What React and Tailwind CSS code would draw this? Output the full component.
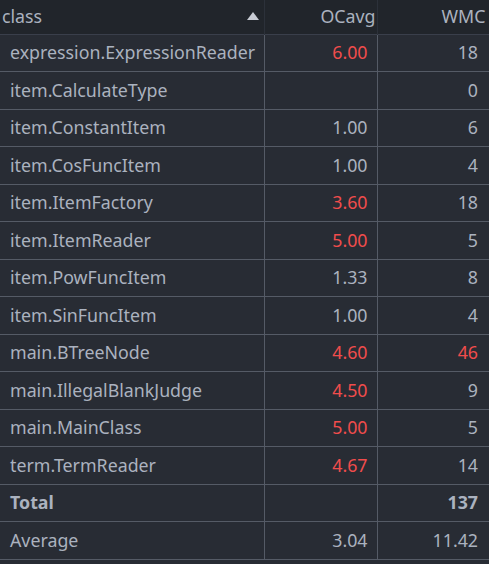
import React from "react";

const rows = [
  { name: "expression.ExpressionReader", oc: "6.00", ocRed: true, wmc: "18" },
  { name: "item.CalculateType", oc: "", wmc: "0" },
  { name: "item.ConstantItem", oc: "1.00", wmc: "6" },
  { name: "item.CosFuncItem", oc: "1.00", wmc: "4" },
  { name: "item.ItemFactory", oc: "3.60", ocRed: true, wmc: "18" },
  { name: "item.ItemReader", oc: "5.00", ocRed: true, wmc: "5" },
  { name: "item.PowFuncItem", oc: "1.33", wmc: "8" },
  { name: "item.SinFuncItem", oc: "1.00", wmc: "4" },
  { name: "main.BTreeNode", oc: "4.60", ocRed: true, wmc: "46", wmcRed: true },
  { name: "main.IllegalBlankJudge", oc: "4.50", ocRed: true, wmc: "9" },
  { name: "main.MainClass", oc: "5.00", ocRed: true, wmc: "5" },
  { name: "term.TermReader", oc: "4.67", ocRed: true, wmc: "14" },
];

export default function App() {
  return (
    <div
      className="w-[489px] h-[564px] overflow-hidden bg-[#282c34] text-[#abb2bf] text-[17.8px]"
      style={{ fontFamily: '"Noto Sans", "Open Sans", sans-serif' }}
    >
      <table className="w-[493px] table-fixed border-collapse">
        <colgroup>
          <col className="w-[264px]" />
          <col className="w-[113px]" />
          <col className="w-[116px]" />
        </colgroup>
        <thead className="bg-[#21252b]">
          <tr className="h-[34px] border-b border-[#3a3f4b]">
            <th className="pl-[2px] pr-[4px] text-left font-normal border-r border-[#2c313a]">
              <div className="flex items-center justify-between">
                <span>class</span>
                <svg width="12" height="8" viewBox="0 0 12 8" className="mr-[1px] mb-[2px]">
                  <path d="M6 0 L12 8 L0 8 Z" fill="#c8ccd4" />
                </svg>
              </div>
            </th>
            <th className="pr-[1px] text-right font-normal border-r border-[#2c313a]">OCavg</th>
            <th className="pl-[64px] text-left font-normal whitespace-nowrap overflow-hidden">WMC</th>
          </tr>
        </thead>
        <tbody>
          {rows.map((r) => (
            <tr key={r.name} className="h-[37.5px] border-b border-[#555b66]">
              <td className="pl-[10px] border-r border-[#555b66] whitespace-nowrap">{r.name}</td>
              <td className={`pr-[9px] text-right border-r border-[#555b66] ${r.ocRed ? "text-[#f14c4c]" : ""}`}>
                {r.oc}
              </td>
              <td className={`pr-[15px] text-right ${r.wmcRed ? "text-[#f14c4c]" : ""}`}>{r.wmc}</td>
            </tr>
          ))}
          <tr className="h-[37.5px] border-b border-[#555b66] font-bold">
            <td className="pl-[10px] border-r border-[#555b66]">Total</td>
            <td className="border-r border-[#555b66]"></td>
            <td className="pr-[15px] text-right">137</td>
          </tr>
          <tr className="h-[37.5px] border-b border-[#555b66]">
            <td className="pl-[10px] border-r border-[#555b66]">Average</td>
            <td className="pr-[9px] text-right border-r border-[#555b66]">3.04</td>
            <td className="pr-[15px] text-right">11.42</td>
          </tr>
        </tbody>
      </table>
    </div>
  );
}
